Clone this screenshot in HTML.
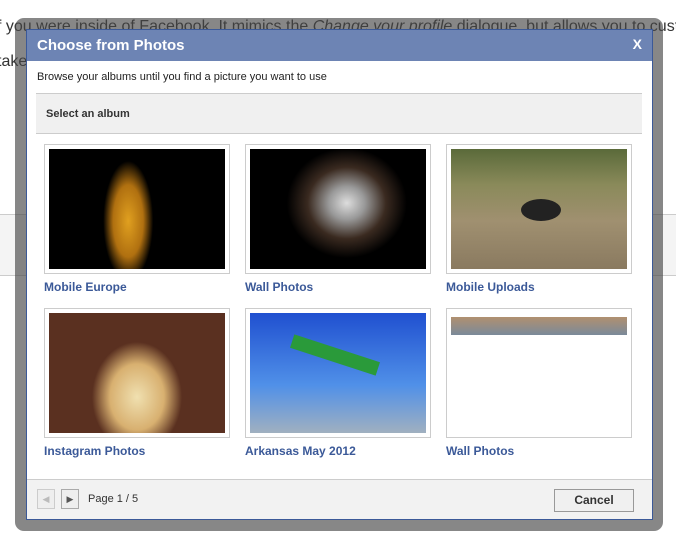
<!DOCTYPE html>
<html><head><meta charset="utf-8"><style>
*{margin:0;padding:0;box-sizing:border-box}
body{width:676px;height:548px;overflow:hidden;background:#fff;font-family:"Liberation Sans",sans-serif;position:relative}
.bgtext{position:absolute;left:-3px;font-size:16px;color:#333;white-space:nowrap}
.band{position:absolute;left:0;width:676px;top:214px;height:62px;background:#f4f4f4;border-top:1px solid #ccc;border-bottom:1px solid #ccc}
.frame{position:absolute;left:15px;top:18px;width:648px;height:513px;background:rgba(70,70,70,0.65);border-radius:9px}
.dlg{position:absolute;left:26px;top:29px;width:627px;height:491px;background:#fff;border:1px solid #3b5998}
.hd{height:31px;background:#6d84b4;color:#fff;font-weight:bold;font-size:15px;padding:7px 0 0 10px;position:relative}
.hd .x{position:absolute;right:10px;top:6px;font-size:14px}
.desc{position:absolute;left:10px;top:41px;font-size:11px;color:#222}
.sel{position:absolute;left:9px;top:63px;width:606px;height:41px;background:#f0f0f0;border-top:1px solid #ccc;border-bottom:1px solid #ccc;font-size:11px;font-weight:bold;color:#333;padding:14px 0 0 10px}
.th{position:absolute;width:186px;height:130px;border:1px solid #ccc;padding:4px}
.th div{width:100%;height:100%}
.lb{position:absolute;font-size:12px;font-weight:bold;color:#3b5998}
.ft{position:absolute;left:0;bottom:0;width:625px;height:40px;background:#f2f2f2;border-top:1px solid #ccc}
.pb{position:absolute;top:9px;width:18px;height:20px;border:1px solid #aaa;background:#eee}
.pg{position:absolute;left:61px;top:13px;font-size:11px;color:#333}
.cancel{position:absolute;right:18px;top:9px;width:80px;height:23px;border:1px solid #999;background:#f0f0f0;font-size:12px;font-weight:bold;color:#333;text-align:center;line-height:21px}
</style></head><body>
<div class="bgtext" style="top:18px">f you were inside of Facebook. It mimics the <i>Change your profile</i> dialogue, but allows you to custo</div>
<div class="bgtext" style="top:53px">take</div>
<div class="band"></div>
<div class="frame"></div>
<div class="dlg">
<div class="hd">Choose from Photos<span class="x">X</span></div>
<div class="desc">Browse your albums until you find a picture you want to use</div>
<div class="sel">Select an album</div>

<div class="th" style="left:17px;top:114px"><div style="background:radial-gradient(ellipse 25px 60px at 45% 60%,#e0a020 0,#b07010 60%,#000 100%)"></div></div>
<div class="th" style="left:218px;top:114px"><div style="background:radial-gradient(ellipse 60px 55px at 55% 45%,#ddd 0,#999 30%,#3a2a20 65%,#000 100%)"></div></div>
<div class="th" style="left:419px;top:114px"><div style="background:linear-gradient(#5a6a3a,#8a8a5a 30%,#a09070 60%,#8a7a60);position:relative"><span style="position:absolute;left:70px;top:50px;width:40px;height:22px;background:#222;border-radius:50%"></span></div></div>
<div class="lb" style="left:17px;top:250px">Mobile Europe</div>
<div class="lb" style="left:218px;top:250px">Wall Photos</div>
<div class="lb" style="left:419px;top:250px">Mobile Uploads</div>

<div class="th" style="left:17px;top:278px"><div style="background:radial-gradient(ellipse 45px 55px at 50% 70%,#f0e0b0 0,#d8b070 60%,#5a3020 100%)"></div></div>
<div class="th" style="left:218px;top:278px"><div style="background:linear-gradient(#2050d0,#5090e8 60%,#a0b0c0);position:relative"><span style="position:absolute;left:40px;top:35px;width:90px;height:14px;background:#2a9a3a;transform:rotate(18deg)"></span></div></div>
<div class="th" style="left:419px;top:278px"><div style="background:linear-gradient(#fff 0,#fff 4px,#b09070 4px,#7a8a9a 22px,#fff 22px)"></div></div>
<div class="lb" style="left:17px;top:414px">Instagram Photos</div>
<div class="lb" style="left:218px;top:414px">Arkansas May 2012</div>
<div class="lb" style="left:419px;top:414px">Wall Photos</div>

<div class="ft">
<div class="pb" style="left:10px;border-color:#ccc;color:#bbb;font-size:9px;text-align:center;line-height:18px">◀</div>
<div class="pb" style="left:34px;color:#555;font-size:9px;text-align:center;line-height:18px">▶</div>
<div class="pg">Page 1 / 5</div>
<div class="cancel">Cancel</div>
</div>
</div>
</body></html>
